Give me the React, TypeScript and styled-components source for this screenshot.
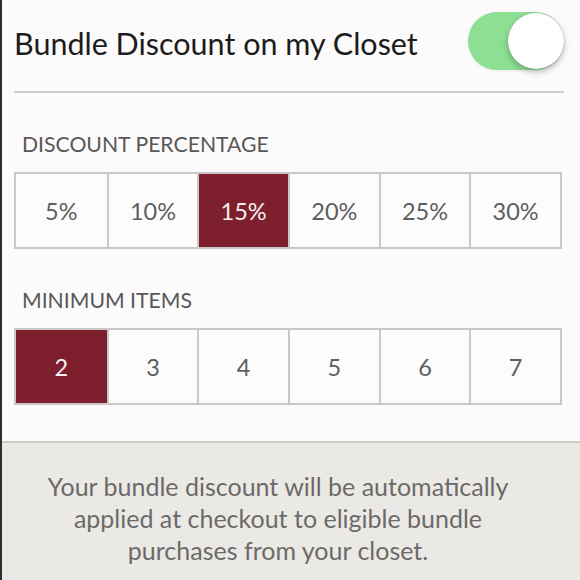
import React, { useState } from "react";
import { styled, createGlobalStyle } from "styled-components";

const maroon = "#7e1f2e";
const cellBorder = "#c9c7c7";

const GlobalStyle = createGlobalStyle`
  html, body {
    margin: 0;
    padding: 0;
    background: #fcfafa;
    font-family: Lato, "Open Sans", sans-serif;
  }
`;

const Page = styled.div`
  display: flex;
  flex-direction: column;
  width: 580px;
  height: 580px;
  box-sizing: border-box;
  border-left: 2px solid #2e2e2e;
  background: #fcfafa;
  overflow: hidden;
`;

const Settings = styled.div`
  display: flex;
  flex-direction: column;
  padding: 0 16px 0 12px;
  height: 441px;
  box-sizing: border-box;
`;

const HeaderRow = styled.div`
  display: flex;
  align-items: center;
  justify-content: space-between;
  height: 93px;
  border-bottom: 2px solid #cfcdcd;
  box-sizing: border-box;
  padding-bottom: 9px;
`;

const Title = styled.span`
  font-size: 30.5px;
  color: #1c1c1c;
  padding-top: 4px;
`;

const SwitchTrack = styled.button<{ $on: boolean }>`
  position: relative;
  width: 96px;
  height: 58px;
  border-radius: 29px;
  border: none;
  padding: 0;
  background: ${(p) => (p.$on ? "#8ddf94" : "#e3e3e3")};
  box-shadow: 0 1px 3px rgba(0, 0, 0, 0.08);
  cursor: pointer;
`;

const Knob = styled.span<{ $on: boolean }>`
  position: absolute;
  top: 1px;
  left: ${(p) => (p.$on ? "40px" : "1px")};
  width: 56px;
  height: 56px;
  border-radius: 50%;
  background: #fff;
  box-shadow: 0 3px 6px rgba(0, 0, 0, 0.25), 0 0 1px rgba(0, 0, 0, 0.2);
`;

const SectionLabel = styled.div<{ $top: number }>`
  margin: ${(p) => p.$top}px 0 0 8px;
  font-size: 21.2px;
  color: #585858;
  line-height: 22px;
`;

const Segments = styled.div`
  display: grid;
  grid-template-columns: repeat(6, 1fr);
  margin-top: 17px;
  height: 77px;
  border: 2px solid ${cellBorder};
  box-sizing: border-box;
  width: 548px;
`;

const Segment = styled.button<{ $active: boolean }>`
  border: none;
  border-left: 2px solid ${cellBorder};
  &:first-child {
    border-left: none;
  }
  background: ${(p) => (p.$active ? maroon : "#fdfcfc")};
  color: ${(p) => (p.$active ? "#f6eef0" : "#5e5e5e")};
  font-family: Lato, "Open Sans", sans-serif;
  font-size: 23.5px;
  padding: 0;
  cursor: pointer;
`;

const Footer = styled.div`
  flex: 1;
  border-top: 2px solid #cdcbc8;
  background: #ebe9e5;
  display: flex;
  justify-content: center;
  padding: 27px 26px 0 0;
`;

const FooterText = styled.p`
  margin: 0;
  width: 490px;
  text-align: center;
  font-size: 25px;
  line-height: 32px;
  color: #6b6a68;
`;

const percents = [5, 10, 15, 20, 25, 30];
const minimums = [2, 3, 4, 5, 6, 7];

export default function App() {
  const [on, setOn] = useState(true);
  const [pct, setPct] = useState(15);
  const [min, setMin] = useState(2);

  return (
    <Page>
      <GlobalStyle />
      <Settings>
        <HeaderRow>
          <Title>Bundle Discount on my Closet</Title>
          <SwitchTrack $on={on} onClick={() => setOn(!on)} aria-label="toggle">
            <Knob $on={on} />
          </SwitchTrack>
        </HeaderRow>

        <SectionLabel $top={40}>DISCOUNT PERCENTAGE</SectionLabel>
        <Segments>
          {percents.map((v) => (
            <Segment key={v} $active={v === pct} onClick={() => setPct(v)}>
              {v}%
            </Segment>
          ))}
        </Segments>

        <SectionLabel $top={40}>MINIMUM ITEMS</SectionLabel>
        <Segments>
          {minimums.map((v) => (
            <Segment key={v} $active={v === min} onClick={() => setMin(v)}>
              {v}
            </Segment>
          ))}
        </Segments>
      </Settings>
      <Footer>
        <FooterText>
          Your bundle discount will be automatically applied at checkout to eligible bundle
          purchases from your closet.
        </FooterText>
      </Footer>
    </Page>
  );
}
